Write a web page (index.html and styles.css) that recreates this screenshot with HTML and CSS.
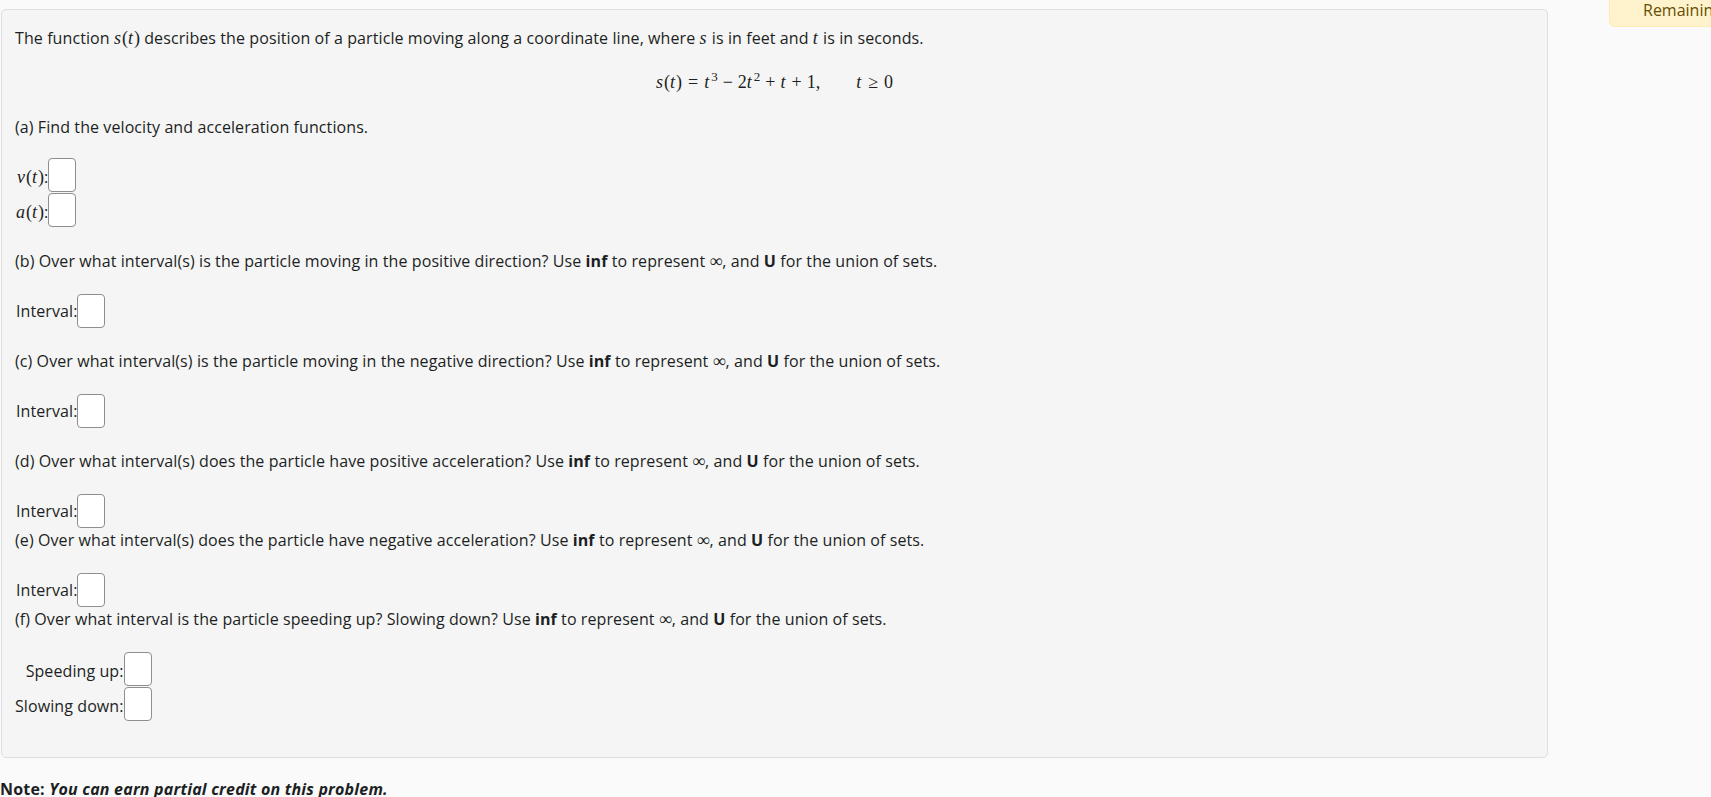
FILE: index.html
```html
<!DOCTYPE html>
<html lang="en">
<head>
    <meta charset="UTF-8">
    <meta name="viewport" content="width=device-width, initial-scale=1.0">
    <title>Problem 4</title>
    <link rel="stylesheet" href="styles.css">
</head>
<body>
    <div class="timer">Remaining time: 00:42:17</div>

    <div class="problem">
        <p class="text">The function <span class="math"><i>s</i>(<i>t</i>)</span> describes the position of a particle moving along a coordinate line, where <span class="math"><i>s</i></span> is in feet and <span class="math"><i>t</i></span> is in seconds.</p>

        <div class="display">
            <span class="math"><i>s</i>(<i>t</i>)<span class="rel">=</span><i>t</i><sup>3</sup><span class="bin">−</span>2<i>t</i><sup>2</sup><span class="bin">+</span><i>t</i><span class="bin">+</span>1,<span class="qquad"></span><i>t</i><span class="rel">≥</span>0</span>
        </div>

        <p class="text part">(a) Find the velocity and acceleration functions.</p>

        <div class="answers answers-a">
            <label class="answer-label"><span class="math"><i>v</i>(<i>t</i>)</span>:</label>
            <input class="answer" type="text">
            <label class="answer-label"><span class="math"><i>a</i>(<i>t</i>)</span>:</label>
            <input class="answer" type="text">
        </div>

        <p class="text part part-b">(b) Over what interval(s) is the particle moving in the positive direction? Use <b>inf</b> to represent <span class="math">∞</span>, and <b>U</b> for the union of sets.</p>
        <div class="answer-row">Interval:<input class="answer" type="text"></div>

        <p class="text part">(c) Over what interval(s) is the particle moving in the negative direction? Use <b>inf</b> to represent <span class="math">∞</span>, and <b>U</b> for the union of sets.</p>
        <div class="answer-row">Interval:<input class="answer" type="text"></div>

        <p class="text part">(d) Over what interval(s) does the particle have positive acceleration? Use <b>inf</b> to represent <span class="math">∞</span>, and <b>U</b> for the union of sets.</p>
        <div class="answer-row">Interval:<input class="answer" type="text"></div>
        <p class="text">(e) Over what interval(s) does the particle have negative acceleration? Use <b>inf</b> to represent <span class="math">∞</span>, and <b>U</b> for the union of sets.</p>
        <div class="answer-row">Interval:<input class="answer" type="text"></div>
        <p class="text">(f) Over what interval is the particle speeding up? Slowing down? Use <b>inf</b> to represent <span class="math">∞</span>, and <b>U</b> for the union of sets.</p>

        <div class="answers answers-f">
            <label class="answer-label">Speeding up:</label>
            <input class="answer" type="text">
            <label class="answer-label">Slowing down:</label>
            <input class="answer" type="text">
        </div>
    </div>

    <p class="note"><b>Note:</b> <b><i>You can earn partial credit on this problem.</i></b></p>
</body>
</html>
```

FILE: styles.css
```css
* {
    margin: 0;
    padding: 0;
    box-sizing: border-box;
}

html,
body {
    overflow: hidden;
}

body {
    font-family: 'Segoe UI', 'Open Sans', 'Noto Sans', sans-serif;
    font-size: 16px;
    line-height: 24px;
    letter-spacing: 0.09px;
    color: #1c1f23;
    background: #fafafa;
    min-height: 100vh;
}

.timer {
    position: absolute;
    top: -1px;
    left: 1609px;
    height: 28px;
    padding: 0 34px 0 33px;
    white-space: nowrap;
    font-size: 16px;
    line-height: 20px;
    letter-spacing: 0;
    color: #664d03;
    background: #fff3cd;
    border: 1px solid #ffecb5;
    border-radius: 0 0 6px 6px;
}

.problem {
    margin: 9px 0 0 1px;
    width: 1547px;
    padding: 16px 13px 36px;
    background: #f5f5f5;
    border: 1px solid #dedede;
    border-radius: 5px;
}

.text {
    height: 24px;
    white-space: nowrap;
}

.part {
    margin-top: 21px;
}

.part-b {
    margin-top: 22px;
}

.math {
    font-family: 'Liberation Serif', 'DejaVu Serif', serif;
    font-size: 18px;
    letter-spacing: 0;
}

.math i {
    font-style: italic;
    padding-right: 1px;
}

.math sup {
    font-size: 13px;
    line-height: 0;
    vertical-align: 7px;
    margin-left: 1px;
}

.display {
    margin-top: 20px;
    height: 24px;
    text-align: center;
}

.rel {
    margin: 0 6px;
}

.bin {
    margin: 0 5px;
}

.qquad {
    display: inline-block;
    width: 36px;
}

.answers {
    display: grid;
    grid-template-columns: auto 28px;
    row-gap: 1px;
    align-items: center;
    justify-content: start;
    margin-top: 19px;
}

.answers-f {
    margin-top: 21px;
}

.answer-label {
    text-align: right;
    padding-top: 3px;
}

.answers-a .answer-label {
    padding-left: 1px;
}

.answer-row {
    display: flex;
    align-items: center;
    margin-top: 21px;
    padding-left: 1px;
}

.answer {
    display: block;
    width: 28px;
    height: 34px;
    background: #fff;
    border: 1px solid #8e8e8e;
    border-radius: 4px;
    font: inherit;
}

.note {
    margin-top: 19px;
    font-size: 16px;
    letter-spacing: 0.2px;
    white-space: nowrap;
}
```
